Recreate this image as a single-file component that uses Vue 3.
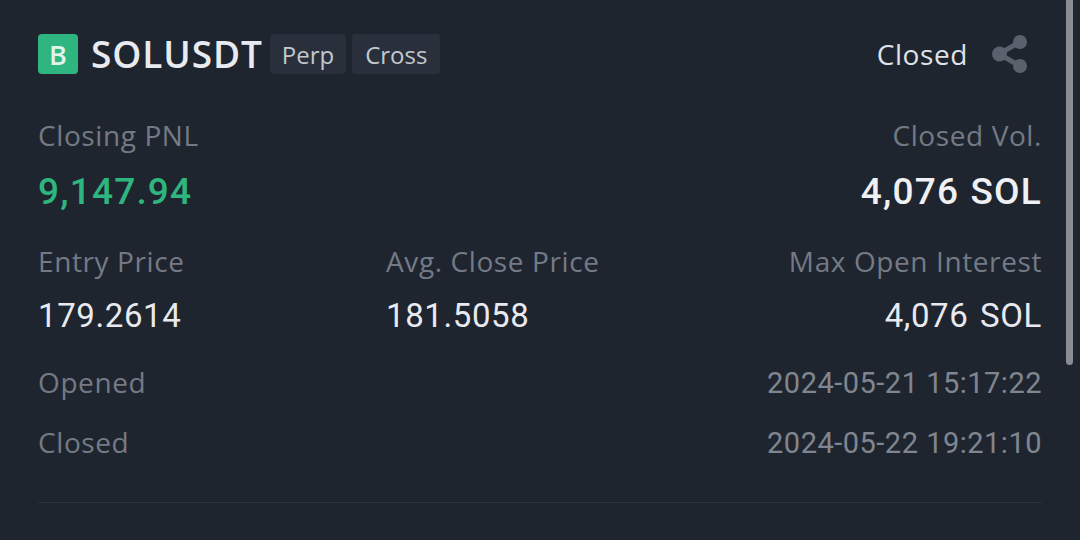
<template>
  <div class="screen">
    <div class="card">
      <div class="header">
        <div class="symbol-side">
          <span class="side-badge">B</span>
          <span class="symbol">SOLUSDT</span>
          <span class="tag first-tag">Perp</span>
          <span class="tag">Cross</span>
        </div>
        <div class="status">
          <span class="status-text">Closed</span>
          <svg class="share" viewBox="0 0 36 38" width="36" height="38">
            <path d="M28 7 L7 19 L28 31" fill="none" stroke="#5a606c" stroke-width="5" />
            <circle cx="28" cy="7" r="7" fill="#5a606c" />
            <circle cx="7.5" cy="19" r="7.5" fill="#5a606c" />
            <circle cx="28" cy="31" r="7" fill="#5a606c" />
          </svg>
        </div>
      </div>

      <div class="row pnl-row">
        <div class="cell">
          <div class="label">Closing PNL</div>
          <div class="big green">9,147.94</div>
        </div>
        <div class="cell right">
          <div class="label">Closed Vol.</div>
          <div class="big">4,076 SOL</div>
        </div>
      </div>

      <div class="row price-row">
        <div class="cell">
          <div class="label">Entry Price</div>
          <div class="value">179.2614</div>
        </div>
        <div class="cell">
          <div class="label">Avg. Close Price</div>
          <div class="value">181.5058</div>
        </div>
        <div class="cell right">
          <div class="label">Max Open Interest</div>
          <div class="value">4,076 SOL</div>
        </div>
      </div>

      <div class="time-row first">
        <span class="label">Opened</span>
        <span class="time">2024-05-21 15:17:22</span>
      </div>
      <div class="time-row">
        <span class="label">Closed</span>
        <span class="time">2024-05-22 19:21:10</span>
      </div>

      <div class="divider"></div>
    </div>
    <div class="scrollbar"></div>
  </div>
</template>

<script setup>
</script>

<style scoped>
.screen {
  position: relative;
  width: 1080px;
  height: 540px;
  overflow: hidden;
  background: #1f252f;
  font-family: "Roboto", "Liberation Sans", sans-serif;
}

.card {
  padding: 34px 38px 0 38px;
  width: 1004px;
}

.header {
  display: flex;
  justify-content: space-between;
  align-items: center;
  height: 40px;
}

.symbol-side {
  display: flex;
  align-items: center;
}

.side-badge {
  width: 40px;
  height: 40px;
  border-radius: 4px;
  background: #2fb57f;
  color: #dff5ec;
  font-family: "Open Sans", sans-serif;
  font-size: 27px;
  font-weight: 600;
  line-height: 41px;
  text-align: center;
}

.symbol {
  margin-left: 13px;
  color: #e8eaef;
  font-family: "Open Sans", sans-serif;
  font-size: 37px;
  font-weight: 600;
  line-height: 42px;
  letter-spacing: 0.9px;
}

.tag {
  height: 40px;
  line-height: 42px;
  margin-left: 6px;
  padding: 0 13px;
  border-radius: 4px;
  background: #2a303b;
  color: #c3c7cf;
  font-family: "Open Sans", sans-serif;
  font-size: 24px;
}

.first-tag {
  margin-left: 7px;
  padding: 0 12px;
}

.status {
  display: flex;
  align-items: center;
  gap: 24px;
  padding-right: 14px;
}

.status-text {
  color: #dfe2e7;
  font-family: "Open Sans", sans-serif;
  font-size: 28px;
  line-height: 42px;
  letter-spacing: 0.6px;
}

.share {
  display: block;
}

.row {
  display: flex;
  justify-content: space-between;
}

.pnl-row {
  margin-top: 44px;
}

.price-row {
  margin-top: 30px;
  display: grid;
  grid-template-columns: 348px 1fr auto;
}

.cell.right {
  text-align: right;
}

.label {
  margin-bottom: 2px;
  color: #747a85;
  font-family: "Open Sans", sans-serif;
  font-size: 28px;
  line-height: 34px;
  letter-spacing: 0.6px;
}

.big {
  margin-top: 18px;
  color: #eef0f3;
  font-size: 37px;
  font-weight: 500;
  line-height: 44px;
  letter-spacing: 1.2px;
  word-spacing: 1px;
}

.green {
  color: #2fb57f;
}

.value {
  margin-top: 19px;
  color: #e8eaef;
  font-size: 33px;
  line-height: 38px;
  letter-spacing: 0.6px;
  word-spacing: 3px;
}

.time-row {
  display: flex;
  justify-content: space-between;
  align-items: center;
  height: 36px;
  margin-top: 24px;
}

.time-row.first {
  margin-top: 30px;
}

.time {
  color: #808690;
  font-size: 29px;
  letter-spacing: 0.5px;
}

.divider {
  margin-top: 41px;
  height: 1px;
  background: #2c323d;
}

.scrollbar {
  position: absolute;
  top: 0;
  left: 1066px;
  width: 7px;
  height: 365px;
  border-radius: 0 0 4px 4px;
  background: #8b8b93;
}
</style>
